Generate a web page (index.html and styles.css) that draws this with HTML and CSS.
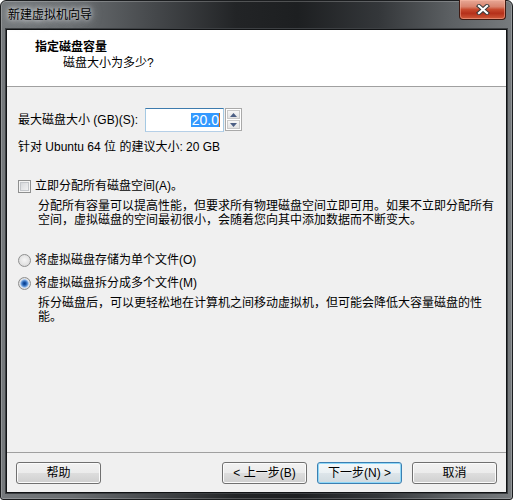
FILE: index.html
```html
<!DOCTYPE html>
<html lang="zh-CN">
<head>
<meta charset="utf-8">
<title>新建虚拟机向导</title>
<link rel="stylesheet" href="styles.css">
</head>
<body>
<div class="window">
  <div class="titlebar">
    <span class="title">新建虚拟机向导</span>
    <div class="close">
      <svg width="14" height="11" viewBox="0 0 14 11">
        <path d="M3 2 L11 9 M11 2 L3 9" stroke="#3b3b3b" stroke-width="4.2" stroke-linecap="square"/>
        <path d="M3 2 L11 9 M11 2 L3 9" stroke="#ffffff" stroke-width="2.2" stroke-linecap="square"/>
      </svg>
    </div>
  </div>
  <div class="client">
    <div class="header">
      <div class="h-title">指定磁盘容量</div>
      <div class="h-sub">磁盘大小为多少?</div>
    </div>
    <div class="body">
      <div class="size-row">
        <span class="label">最大磁盘大小 (GB)(S):</span>
        <div class="textbox"><span class="sel">20.0</span><span class="caret"></span></div>
        <div class="spinner">
          <div class="spin-btn"><svg width="7" height="4" viewBox="0 0 7 4"><path d="M0 4 L3.5 0 L7 4 Z" fill="#4c5f84"/></svg></div>
          <div class="spin-btn"><svg width="7" height="4" viewBox="0 0 7 4"><path d="M0 0 L7 0 L3.5 4 Z" fill="#4c5f84"/></svg></div>
        </div>
      </div>
      <div class="hint">针对 Ubuntu 64 位 的建议大小: 20 GB</div>
      <div class="check-row"><span class="checkbox"></span><span>立即分配所有磁盘空间(A)。</span></div>
      <p class="desc">分配所有容量可以提高性能，但要求所有物理磁盘空间立即可用。如果不立即分配所有空间，虚拟磁盘的空间最初很小，会随着您向其中添加数据而不断变大。</p>
      <div class="radio-row first"><span class="radio"></span><span>将虚拟磁盘存储为单个文件(O)</span></div>
      <div class="radio-row"><span class="radio checked"></span><span>将虚拟磁盘拆分成多个文件(M)</span></div>
      <p class="desc split">拆分磁盘后，可以更轻松地在计算机之间移动虚拟机，但可能会降低大容量磁盘的性能。</p>
    </div>
    <div class="footer">
      <button class="btn">帮助</button>
      <div class="spacer"></div>
      <button class="btn">&lt; 上一步(B)</button>
      <button class="btn default">下一步(N) &gt;</button>
      <button class="btn">取消</button>
    </div>
  </div>
</div>
</body>
</html>
```

FILE: styles.css
```css
html, body {
  margin: 0;
  padding: 0;
  background: #ffffff;
}

body {
  font-family: "Liberation Sans", "Noto Sans CJK SC", sans-serif;
  font-size: 12px;
  color: #000;
}

.window {
  position: relative;
  width: 513px;
  height: 500px;
  box-sizing: border-box;
  border: 1px solid #1b1d1f;
  border-radius: 6px 6px 3px 3px;
  padding: 0 5px 6px;
  display: flex;
  flex-direction: column;
  background: linear-gradient(to right, #75797c 0%, #6a6e71 14%, #45484b 30%, #222426 46%, #1d1f21 58%, #34373a 74%, #5c6063 88%, #777b7e 100%);
  box-shadow: inset 0 0 0 1px rgba(255, 255, 255, 0.22);
}

.titlebar {
  position: relative;
  flex: none;
  height: 28px;
  box-sizing: border-box;
  padding: 6px 0 0 2px;
  line-height: 16px;
}

.title {
  color: #000;
  text-shadow: 0 0 4px rgba(235, 238, 240, 0.95), 0 0 8px rgba(210, 214, 218, 0.85), 0 0 12px rgba(190, 195, 200, 0.6);
}

.close {
  position: absolute;
  top: -1px;
  right: 1px;
  width: 47px;
  height: 20px;
  box-sizing: border-box;
  border: 1px solid #3e1a12;
  border-top: none;
  border-radius: 0 0 4px 4px;
  background: linear-gradient(#e7a896 0%, #d9846e 35%, #c74a2e 50%, #b5301a 70%, #cf5a3a 100%);
  box-shadow: inset 0 0 0 1px rgba(255, 190, 170, 0.45);
  display: flex;
  align-items: center;
  justify-content: center;
}

.client {
  flex: 1;
  min-height: 0;
  display: flex;
  flex-direction: column;
  background: #f0f0f0;
  border: 1px solid #111315;
  box-shadow: 0 0 0 1px #3d4043;
}

.header {
  flex: none;
  height: 57px;
  box-sizing: border-box;
  background: #ffffff;
  border-bottom: 1px solid #a0a0a0;
  padding: 9px 0 0 28px;
}

.h-title {
  font-weight: bold;
  line-height: 16px;
}

.h-sub {
  line-height: 16px;
  padding-left: 28px;
}

.body {
  flex: 1;
  padding: 21px 10px 0 11px;
}

.size-row {
  display: flex;
  align-items: center;
  height: 24px;
}

.label {
  width: 127px;
  line-height: 16px;
}

.textbox {
  width: 79px;
  height: 24px;
  box-sizing: border-box;
  border: 1px solid;
  border-color: #3d7bad #a4c9e3 #b5cfe7 #a4c9e3;
  background: #ffffff;
  display: flex;
  justify-content: flex-end;
  align-items: center;
  padding-right: 3px;
  font-size: 14px;
}

.sel {
  background: #3399ff;
  color: #ffffff;
  line-height: 14px;
  padding-left: 1px;
}

.caret {
  width: 1px;
  height: 14px;
  background: #c86a10;
}

.spinner {
  margin-left: 1px;
  width: 17px;
  height: 23px;
  box-sizing: border-box;
  border: 1px solid #a9a9a9;
  background: #ffffff;
  padding: 1px;
  display: flex;
  flex-direction: column;
  gap: 1px;
  align-self: flex-start;
}

.spin-btn {
  flex: 1;
  box-sizing: border-box;
  border: 1px solid #c9c9c9;
  background: linear-gradient(#f7f7f7, #e2e2e2);
  display: flex;
  align-items: center;
  justify-content: center;
}

.hint {
  margin-top: 7px;
  line-height: 16px;
}

.check-row,
.radio-row {
  display: flex;
  align-items: center;
  gap: 4px;
  line-height: 16px;
}

.check-row {
  margin-top: 23px;
}

.checkbox {
  width: 13px;
  height: 13px;
  box-sizing: border-box;
  border: 1px solid #8e8f8f;
  background: linear-gradient(135deg, #cdd0d4 0%, #e6e7e9 55%, #f7f7f7 100%);
  box-shadow: inset 0 0 0 1px #f4f4f4, inset 0 0 0 2px #c4c7cb;
}

.desc {
  margin: 5px 0 0 20px;
  width: 458px;
  line-height: 14px;
}

.desc.split {
  width: 451px;
}

.radio-row {
  margin-top: 7px;
}

.radio-row.first {
  margin-top: 25px;
}

.radio {
  width: 13px;
  height: 13px;
  box-sizing: border-box;
  border-radius: 50%;
  border: 1px solid #8e8f8f;
  background: radial-gradient(circle at 50% 45%, #f6f6f6 0%, #e4e4e4 55%, #d0d0d0 100%);
}

.radio.checked {
  background: radial-gradient(circle at 50% 50%, #0b3d8c 0, #1a56a8 1.5px, #5d92d4 3px, #a9c8ee 4px, #e8e8e8 4.6px, #d2d2d2 6px);
}

.footer {
  flex: none;
  display: flex;
  gap: 10px;
  border-top: 1px solid #a0a0a0;
  padding: 9px 9px 8px;
}

.spacer {
  flex: 1;
}

.btn {
  width: 85px;
  height: 22px;
  padding: 0;
  margin: 0;
  font: inherit;
  color: #000;
  line-height: 20px;
  border: 1px solid #707070;
  border-radius: 3px;
  background: linear-gradient(#f2f2f2 0%, #ebebeb 50%, #dddddd 51%, #cfcfcf 100%);
  box-shadow: inset 0 0 0 1px #fbfbfb;
}

.btn.default {
  border-color: #3c7fb1;
  box-shadow: inset 0 0 0 1px #8fd8f8;
  background: linear-gradient(#f4f8fa 0%, #eaf0f3 50%, #dde5ea 51%, #d0dadf 100%);
}
```
